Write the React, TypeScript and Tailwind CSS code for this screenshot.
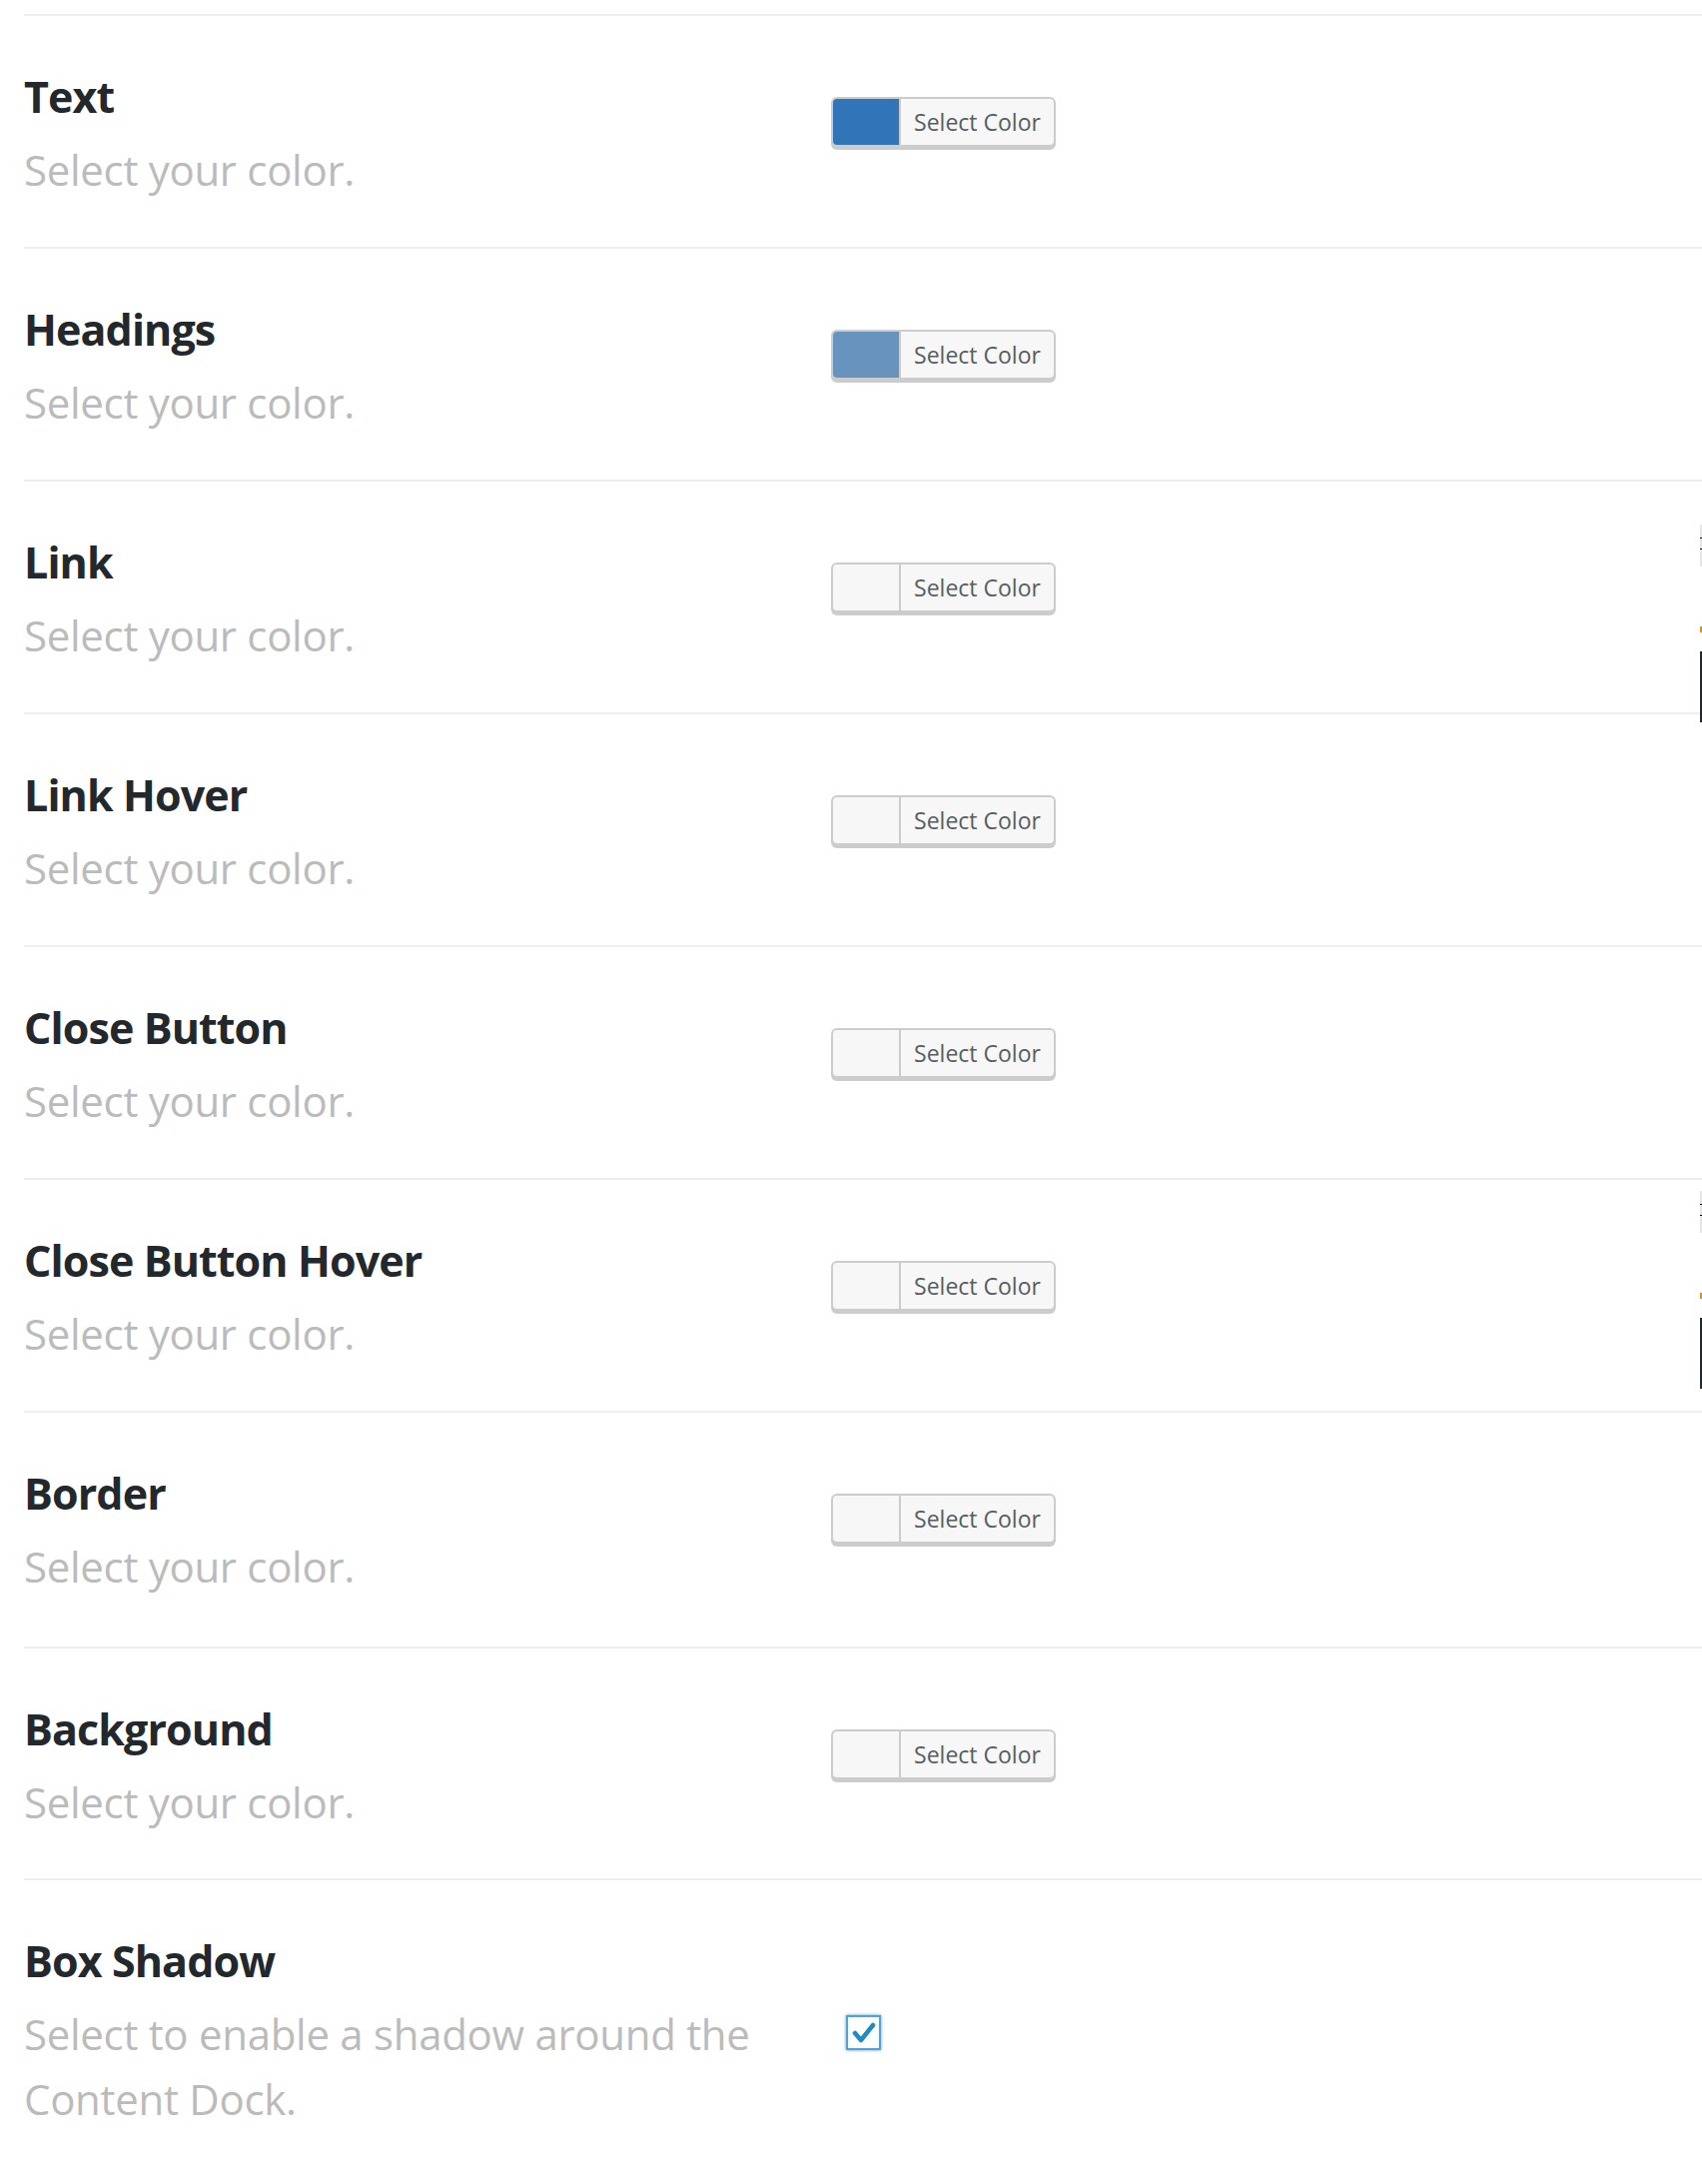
import React from 'react';

const rows = [
  { title: 'Text', swatch: 'bg-[#3174b7]', h: 'h-[233px]' },
  { title: 'Headings', swatch: 'bg-[#6893be]', h: 'h-[233px]' },
  { title: 'Link', swatch: '', h: 'h-[233px]' },
  { title: 'Link Hover', swatch: '', h: 'h-[233px]' },
  { title: 'Close Button', swatch: '', h: 'h-[233px]' },
  { title: 'Close Button Hover', swatch: '', h: 'h-[233px]' },
  { title: 'Border', swatch: '', h: 'h-[236px]' },
  { title: 'Background', swatch: '', h: 'h-[232px]' },
];

const ColorButton = ({ swatch }: { swatch: string }) => (
  <button className="mt-[27px] flex h-[50px] w-[225px] overflow-hidden rounded-[6px] border-2 border-[#cccccc] bg-[#f7f7f7] shadow-[0_3px_0_#cccccc]">
    <span className={`h-full w-[66px] ${swatch}`}></span>
    <span className="flex h-full flex-1 items-center justify-center border-l-2 border-[#cccccc] text-[23px] text-[#555d66]">Select Color</span>
  </button>
);

const Label = ({ title, children }: { title: string; children: React.ReactNode }) => (
  <div className="w-[808px] shrink-0 pt-[55px]">
    <h3 className="text-[43px] font-bold leading-[52px] tracking-[-0.9px] text-[#23282d]">{title}</h3>
    <p className="mt-[14px] text-[42px] leading-[65px] tracking-[-0.3px] text-[#bbbbbb]">{children}</p>
  </div>
);

export default function App() {
  return (
    <div className="relative min-h-[2186px] bg-white pl-[24px] pt-[14px] font-['Open_Sans','Noto_Sans',sans-serif]">
      {rows.map((r) => (
        <div key={r.title} className={`flex ${r.h} border-t-2 border-[#eeeeee]`}>
          <Label title={r.title}>Select your color.</Label>
          <div className="pt-[54px]">
            <ColorButton swatch={r.swatch} />
          </div>
        </div>
      ))}
      <div className="flex border-t-2 border-[#eeeeee] pb-[60px]">
        <Label title="Box Shadow">Select to enable a shadow around the Content Dock.</Label>
        <div className="pl-[15px] pt-[135px]">
          <span className="flex h-[35px] w-[35px] items-center justify-center border-2 border-[#5b9dd9] bg-white shadow-[0_0_3px_rgba(30,140,190,0.8)]">
            <svg width="24" height="22" viewBox="0 0 24 22">
              <path d="M3 11 L9 18 L21 3" fill="none" stroke="#1e8cbe" strokeWidth="4.5" strokeLinecap="round" strokeLinejoin="round" />
            </svg>
          </span>
        </div>
      </div>

      {/* bits of a neighbouring panel cut off at the right edge */}
      <div className="absolute right-0 top-[525px] flex h-[42px] w-[2px] flex-col bg-[#e5e5e5] pt-[13px]">
        <span className="h-px w-full bg-black"></span>
        <span className="mt-[10px] h-px w-full bg-black"></span>
      </div>
      <span className="absolute right-0 top-[627px] h-[6px] w-[2px] bg-[#d98f2b]"></span>
      <span className="absolute right-0 top-[652px] h-[71px] w-[2px] bg-[#23282d]"></span>
      <div className="absolute right-0 top-[1192px] flex h-[42px] w-[2px] flex-col bg-[#e5e5e5] pt-[13px]">
        <span className="h-px w-full bg-black"></span>
        <span className="mt-[10px] h-px w-full bg-black"></span>
      </div>
      <span className="absolute right-0 top-[1294px] h-[6px] w-[2px] bg-[#d98f2b]"></span>
      <span className="absolute right-0 top-[1319px] h-[71px] w-[2px] bg-[#23282d]"></span>
    </div>
  );
}
